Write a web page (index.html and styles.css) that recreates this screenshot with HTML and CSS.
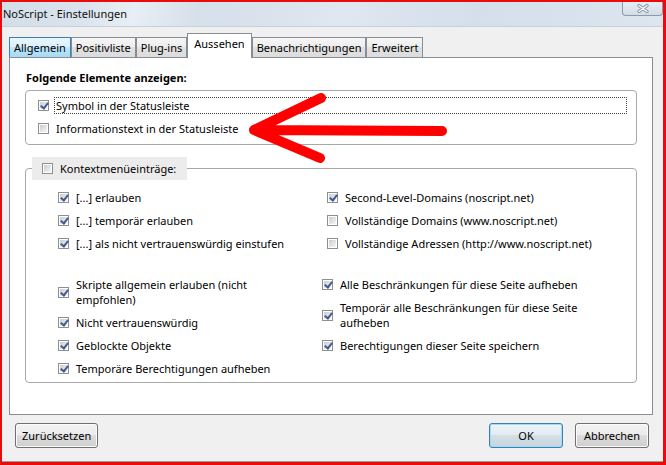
FILE: index.html
```html
<!DOCTYPE html>
<html lang="de">
<head>
  <meta charset="UTF-8" />
  <title>NoScript - Einstellungen</title>
  <link rel="stylesheet" href="styles.css">
</head>
<body>
  <div class="frame">
    <div class="titlebar">
      <span class="title">NoScript - Einstellungen</span>
      <button class="close" title="Schließen">
        <svg viewBox="0 0 12 9" width="12" height="9">
          <path d="M2 1.5 L10 7.5 M10 1.5 L2 7.5" stroke="#7f8fa3" stroke-width="3.2" stroke-linecap="round" fill="none"/>
          <path d="M2 1.5 L10 7.5 M10 1.5 L2 7.5" stroke="#fbfcfd" stroke-width="1.5" stroke-linecap="round" fill="none"/>
        </svg>
      </button>
    </div>

    <div class="dialog">
      <div class="tabs">
        <span class="tab hover">Allgemein</span>
        <span class="tab">Positivliste</span>
        <span class="tab">Plug-ins</span>
        <span class="tab selected">Aussehen</span>
        <span class="tab">Benachrichtigungen</span>
        <span class="tab">Erweitert</span>
      </div>

      <div class="panel">
        <h3 class="caption">Folgende Elemente anzeigen:</h3>

        <!-- Statusleiste -->
        <div class="group show">
          <label class="check focus"><span class="box on"></span><span class="label">Symbol in der Statusleiste</span></label>
          <label class="check"><span class="box"></span><span class="label">Informationstext in der Statusleiste</span></label>
        </div>

        <!-- Kontextmenü -->
        <fieldset class="group context">
          <legend><span class="check"><span class="box"></span><span class="label">Kontextmenüeinträge:</span></span></legend>

          <div class="cols cols-a">
            <div class="col">
              <label class="check"><span class="box on"></span><span class="label">[...] erlauben</span></label>
              <label class="check"><span class="box on"></span><span class="label">[...] temporär erlauben</span></label>
              <label class="check"><span class="box on"></span><span class="label">[...] als nicht vertrauenswürdig einstufen</span></label>
            </div>
            <div class="col">
              <label class="check"><span class="box on"></span><span class="label">Second-Level-Domains (noscript.net)</span></label>
              <label class="check"><span class="box"></span><span class="label">Vollständige Domains (www.noscript.net)</span></label>
              <label class="check"><span class="box"></span><span class="label">Vollständige Adressen (http://www.noscript.net)</span></label>
            </div>
          </div>

          <div class="cols cols-b">
            <div class="col narrow">
              <label class="check"><span class="box on"></span><span class="label">Skripte allgemein erlauben (nicht empfohlen)</span></label>
              <label class="check"><span class="box on"></span><span class="label">Nicht vertrauenswürdig</span></label>
              <label class="check"><span class="box on"></span><span class="label">Geblockte Objekte</span></label>
              <label class="check"><span class="box on"></span><span class="label">Temporäre Berechtigungen aufheben</span></label>
            </div>
            <div class="col wide">
              <label class="check"><span class="box on"></span><span class="label">Alle Beschränkungen für diese Seite aufheben</span></label>
              <label class="check"><span class="box on"></span><span class="label">Temporär alle Beschränkungen für diese Seite aufheben</span></label>
              <label class="check"><span class="box on"></span><span class="label">Berechtigungen dieser Seite speichern</span></label>
            </div>
          </div>
        </fieldset>
      </div>

      <div class="buttons">
        <button class="btn">Zurücksetzen</button>
        <span class="spacer"></span>
        <button class="btn default">OK</button>
        <button class="btn">Abbrechen</button>
      </div>
    </div>

    <!-- hand-drawn marker arrow -->
    <svg class="arrow" viewBox="2 2 661 460" width="661" height="460">
      <path d="M442 131 L254 130 M321 98 L254 130 L320 158" stroke="#ff0000" stroke-width="10" stroke-linecap="round" stroke-linejoin="round" fill="none"/>
    </svg>
  </div>
</body>
</html>
```

FILE: styles.css
```css
* {
  margin: 0;
  padding: 0;
  box-sizing: border-box;
}

html, body {
  height: 100%;
}

body {
  font-family: "Noto Sans", "Liberation Sans", sans-serif;
  font-size: 11px;
  color: #000;
  background: #fff;
}

.frame {
  position: relative;
  width: 666px;
  height: 465px;
  border: solid #ea0b0b;
  border-width: 2px 3px 3px 2px;
  display: flex;
  flex-direction: column;
}

/* title bar */

.titlebar {
  height: 25px;
  display: flex;
  justify-content: space-between;
  align-items: flex-start;
  background: linear-gradient(100deg, #d3dee9 0%, #dae3ed 12%, #e7eef5 20%, #d6e0ea 30%, #dfe7f0 52%, #d4dfea 72%, #dde6ef 100%);
  border-bottom: 1px solid #c6d0db;
}

.title {
  padding: 4px 0 0 1px;
  line-height: 15px;
  color: #101010;
}

.close {
  width: 41px;
  height: 14px;
  border: 1px solid #8a9bb0;
  border-top: none;
  border-radius: 0 0 4px 4px;
  background: linear-gradient(#e8eef5, #d2dce7);
  display: flex;
  align-items: center;
  justify-content: center;
}

.close svg {
  display: block;
}

/* dialog body */

.dialog {
  flex: 1;
  background: #f0f0f0;
  border-bottom: 1px solid #9c9c9c;
  padding: 6px 10px 13px 7px;
  display: flex;
  flex-direction: column;
}

.tabs {
  display: flex;
  align-items: flex-end;
  height: 24px;
}

.tab {
  height: 20px;
  line-height: 19px;
  padding: 0 4px;
  border: 1px solid #898c95;
  border-bottom: none;
  background: linear-gradient(#f6f6f6, #ececec 50%, #e1e1e1 50%, #dcdcdc);
  white-space: nowrap;
}

.tab.hover {
  border-color: #3c7fb1;
  background: linear-gradient(#eaf6fd, #d9f0fc 50%, #bee6fd 50%, #a7d9f5);
}

.tab.selected {
  position: relative;
  height: 25px;
  margin-bottom: -1px;
  padding: 0 6px;
  background: #fff;
}

.panel {
  flex: 1;
  background: #fff;
  border: 1px solid #898c95;
  padding: 0 15px;
}

.caption {
  font-size: 11px;
  font-weight: bold;
  line-height: 16px;
  margin: 12px 0 4px 1px;
}

.group {
  border: 1px solid #a8a8a8;
  border-radius: 4px;
}

.show {
  display: flex;
  flex-direction: column;
  gap: 6px;
  padding: 6px 9px 7px 12px;
}

/* checkboxes */

.check {
  display: flex;
  align-items: center;
}

.box {
  position: relative;
  flex: none;
  width: 11px;
  height: 11px;
  border: 1px solid #8e8f8f;
  padding: 1px;
  background: linear-gradient(135deg, #c9cdd3, #f6f6f6) content-box, #fff;
}

.box.on::after {
  content: '';
  position: absolute;
  left: 3px;
  top: 0;
  width: 3px;
  height: 6px;
  border: solid #44598f;
  border-width: 0 2px 2px 0;
  transform: rotate(38deg);
}

.label {
  margin-left: 5px;
  padding: 0 1px;
  border: 1px dotted transparent;
  line-height: 15px;
}

.check.focus .label {
  flex: 1;
  border-color: #444;
}

/* context menu group */

.context {
  margin-top: 12px;
  padding: 9px 0 5px 6px;
}

.context legend {
  padding: 0 9px 0 10px;
  background: #ececec;
}

.context legend .check {
  height: 23px;
}

.cols {
  display: flex;
  margin-left: 26px;
}

.col {
  display: flex;
  flex-direction: column;
  gap: 6px;
}

.cols-a .col:first-child {
  width: 269px;
}

.cols-b {
  margin-top: 24px;
}

.col.narrow {
  width: 264px;
}

.col.narrow .label {
  max-width: 215px;
}

.col.wide .label {
  max-width: 265px;
}

/* buttons */

.buttons {
  display: flex;
  gap: 12px;
  margin-top: 8px;
  padding: 0 4px 0 6px;
}

.spacer {
  flex: 1;
}

.btn {
  height: 25px;
  min-width: 74px;
  padding: 0 6px;
  font: inherit;
  color: #000;
  border: 1px solid #707070;
  border-radius: 3px;
  background: linear-gradient(#f2f2f2, #ebebeb 50%, #dddddd 50%, #cfcfcf);
  box-shadow: inset 0 0 0 1px #fbfbfb;
}

.btn.default {
  border-color: #3c7fb1;
  background: linear-gradient(#eef4f8, #e2ebf1 50%, #d4dfe6 50%, #c8d5dd);
  box-shadow: inset 0 0 0 1px #9fdcf6;
}

.arrow {
  position: absolute;
  left: 0;
  top: 0;
  pointer-events: none;
}
```
